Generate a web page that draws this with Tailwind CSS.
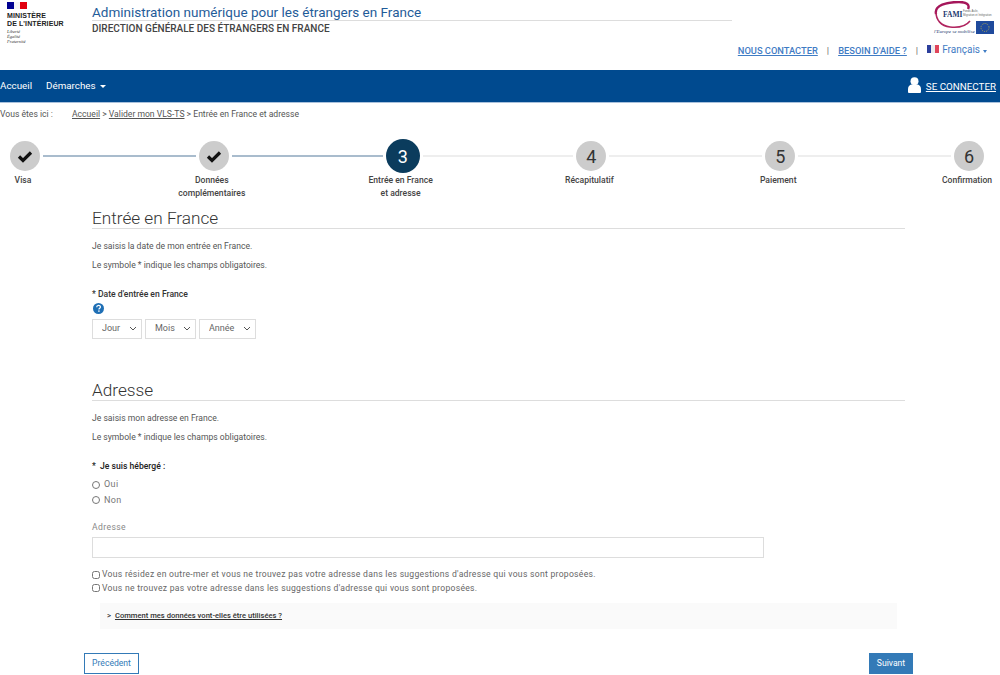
<!DOCTYPE html>
<html lang="fr">
<head>
  <meta charset="UTF-8" />
  <title>Entrée en France et adresse</title>
  <script src="https://cdn.jsdelivr.net/npm/@tailwindcss/browser@4"></script>
</head>
<body class="bg-white font-['Roboto',sans-serif] h-[675px] overflow-hidden flex flex-col text-[#555]">

  <!-- header -->
  <header class="h-[70px] flex shrink-0">
    <div class="w-[92px] pl-[7px] pt-[2px] shrink-0">
      <div class="flex w-[20px] h-[7px]">
        <div class="w-[7px] bg-[#000091]"></div>
        <div class="w-[6px] bg-[#f5f5f5]"></div>
        <div class="w-[7px] bg-[#e1000f]"></div>
      </div>
      <div class="font-['Liberation_Sans',sans-serif] font-bold text-[7px] leading-[7.5px] text-[#222] mt-[3px] tracking-[0.1px]">MINISTÈRE<br>DE L'INTÉRIEUR</div>
      <div class="font-['Liberation_Serif',serif] italic text-[4.5px] leading-[5px] text-[#333] mt-[2px]">Liberté<br>Égalité<br>Fraternité</div>
    </div>
    <div class="w-[640px] shrink-0">
      <div class="text-[13.5px] leading-[20px] text-[#1f5c99] pt-[2px] h-[21px] border-b border-[#ddd]">Administration numérique pour les étrangers en France</div>
      <div class="text-[10px] leading-[16px] text-[#444] font-medium">DIRECTION GÉNÉRALE DES ÉTRANGERS EN FRANCE</div>
    </div>
    <div class="flex-1 flex flex-col items-end">
      <div class="h-[35px] mr-[5px] mt-px">
        <svg width="62" height="34" viewBox="0 0 62 34">
          <path d="M3 13C1 4 14 1 26 1c8 0 11 3 9 7" fill="none" stroke="#a5165a" stroke-width="2.400"/>
          <path d="M3 11c0 8 5 14 14 15 9 1 16-1 20-6" fill="none" stroke="#b0245f" stroke-width="1.600"/>
          <text x="10" y="16" font-family="Liberation Serif" font-weight="700" font-size="7.500" fill="#21386e">FAMI</text>
          <text x="30" y="11" font-family="Liberation Sans" font-size="2.800" fill="#666">Fonds Asile,</text>
          <text x="30" y="15" font-family="Liberation Sans" font-size="2.800" fill="#666">Migration et Intégration</text>
          <text x="1" y="32" font-family="Liberation Serif" font-style="italic" font-size="5" fill="#21386e">l'Europe se mobilise</text>
          <rect x="43" y="20" width="18" height="13" fill="#1f4a9c"/>
          <circle cx="52" cy="26.500" r="4" fill="none" stroke="#d9c23a" stroke-width="0.800" stroke-dasharray="0.900 1.200"/>
        </svg>
      </div>
      <div class="flex items-center text-[9.3px] leading-[14px] font-medium mt-[8px] pr-[13px] text-[#3f7cc4] whitespace-nowrap">
        <a class="underline">NOUS CONTACTER</a>
        <span class="mx-[9px] text-[#777]">|</span>
        <a class="underline">BESOIN D'AIDE ?</a>
        <span class="mx-[9px] text-[#777]">|</span>
        <span class="flex w-[12px] h-[8px] mr-[3px] mt-[-4px]">
          <span class="w-1/3 bg-[#2c3f9c]"></span><span class="w-1/3 bg-[#eee]"></span><span class="w-1/3 bg-[#e0455a]"></span>
        </span>
        <span class="text-[10px] mt-[-3px] font-normal">Français</span>
        <span class="ml-[3px] border-x-[2.5px] border-x-transparent border-t-[3px] border-t-[#3f7cc4]"></span>
      </div>
    </div>
  </header>

  <!-- nav -->
  <nav class="h-[33px] shrink-0 bg-[#004a8f] border-b border-[#a9c1dc] flex items-center text-white text-[9.8px]">
    <a>Accueil</a>
    <a class="ml-[14px] flex items-center">Démarches
      <span class="ml-[4px] border-x-[3px] border-x-transparent border-t-[3px] border-t-white"></span>
    </a>
    <div class="ml-auto flex items-center pr-[4px]">
      <svg width="13" height="16" viewBox="0 0 13 16" class="mr-[5px] mb-[3px]" fill="#fff">
        <circle cx="6.500" cy="4.200" r="4"/>
        <path d="M0 12c0-3 2-4.500 4-4.500 1 .8 4 .8 5 0 2 0 4 1.500 4 4.500v3a1 1 0 0 1-1 1H1a1 1 0 0 1-1-1z"/>
      </svg>
      <a class="underline mt-[2px]">SE CONNECTER</a>
    </div>
  </nav>

  <!-- breadcrumb -->
  <div class="h-[24px] pb-[2px] shrink-0 flex items-center text-[8.6px] text-[#555]">
    <span class="w-[72px]">Vous êtes ici :</span>
    <a class="underline">Accueil</a>&nbsp;&gt;&nbsp;<a class="underline">Valider mon VLS-TS</a>&nbsp;&gt; Entrée en France et adresse
  </div>

  <!-- stepper -->
  <div class="pl-[10px] pr-[16px] mt-[12px] shrink-0">
    <div class="flex items-center gap-[3px] h-[34px]">
      <div class="w-[30px] h-[30px] rounded-full bg-[#ccc] flex items-center justify-center">
        <svg width="16" height="13" viewBox="0 0 16 13"><path d="M2 6.500l4 4 8-8" fill="none" stroke="#111" stroke-width="3.200"/></svg>
      </div>
      <div class="w-[153.2px] h-[2px] bg-[#a9bccd]"></div>
      <div class="w-[30px] h-[30px] rounded-full bg-[#ccc] flex items-center justify-center">
        <svg width="16" height="13" viewBox="0 0 16 13"><path d="M2 6.500l4 4 8-8" fill="none" stroke="#111" stroke-width="3.200"/></svg>
      </div>
      <div class="w-[150.6px] h-[2px] bg-[#a9bccd]"></div>
      <div class="w-[34px] h-[34px] rounded-full bg-[#0b3c5d] text-white text-[18px] flex items-center justify-center">3</div>
      <div class="w-[150.5px] h-[2px] bg-[#eee]"></div>
      <div class="w-[30px] h-[30px] rounded-full bg-[#ccc] text-[#333] text-[18px] flex items-center justify-center">4</div>
      <div class="w-[153px] h-[2px] bg-[#eee]"></div>
      <div class="w-[30px] h-[30px] rounded-full bg-[#ccc] text-[#333] text-[18px] flex items-center justify-center">5</div>
      <div class="w-[152.7px] h-[2px] bg-[#eee]"></div>
      <div class="w-[30px] h-[30px] rounded-full bg-[#ccc] text-[#333] text-[18px] flex items-center justify-center">6</div>
    </div>
    <div class="flex justify-between mt-[1px] mr-[4px] h-[26px] text-[8.6px] leading-[12.5px] font-medium text-[#444] text-center">
      <div class="w-[26px] flex justify-center whitespace-nowrap">Visa</div>
      <div class="w-[26px] flex justify-center whitespace-nowrap">Données<br>complémentaires</div>
      <div class="w-[26px] flex justify-center whitespace-nowrap">Entrée en France<br>et adresse</div>
      <div class="w-[26px] flex justify-center whitespace-nowrap">Récapitulatif</div>
      <div class="w-[26px] flex justify-center whitespace-nowrap">Paiement</div>
      <div class="w-[26px] flex justify-center whitespace-nowrap">Confirmation</div>
    </div>
  </div>

  <!-- form -->
  <main class="ml-[92px] w-[813px] shrink-0 text-[8.6px]">
    <h2 class="text-[17.2px] leading-[20px] font-light text-[#333] border-b border-[#ddd] h-[21px] mt-[8px]">Entrée en France</h2>
    <p class="mt-[12px] leading-[11px]">Je saisis la date de mon entrée en France.</p>
    <p class="mt-[8px] leading-[11px]">Le symbole * indique les champs obligatoires.</p>
    <label class="block mt-[18px] leading-[11px] font-medium text-[#333]">* Date d'entrée en France</label>
    <svg width="11" height="11" viewBox="0 0 11 11" class="mt-[3px] ml-px">
      <circle cx="5.500" cy="5.500" r="5.500" fill="#1f6fb5"/>
      <path d="M3.700 4.200c0-2.400 3.700-2.400 3.700-.2 0 1.300-1.500 1.300-1.500 2.500" fill="none" stroke="#fff" stroke-width="1.200"/>
      <rect x="5.200" y="7.400" width="1.400" height="1.400" fill="#fff"/>
    </svg>
    <div class="flex gap-[3px] mt-[5px]">
      <div class="relative">
        <select class="appearance-none w-[50px] h-[20px] border border-[#ddd] pl-[9px] text-[9px] text-[#666]"><option>Jour</option></select>
        <svg width="8" height="5" viewBox="0 0 8 5" class="absolute right-[5px] top-[7px]"><path d="M1 1l3 3 3-3" fill="none" stroke="#555"/></svg>
      </div>
      <div class="relative">
        <select class="appearance-none w-[51px] h-[20px] border border-[#ddd] pl-[9px] text-[9px] text-[#666]"><option>Mois</option></select>
        <svg width="8" height="5" viewBox="0 0 8 5" class="absolute right-[5px] top-[7px]"><path d="M1 1l3 3 3-3" fill="none" stroke="#555"/></svg>
      </div>
      <div class="relative">
        <select class="appearance-none w-[57px] h-[20px] border border-[#ddd] pl-[9px] text-[9px] text-[#666]"><option>Année</option></select>
        <svg width="8" height="5" viewBox="0 0 8 5" class="absolute right-[5px] top-[7px]"><path d="M1 1l3 3 3-3" fill="none" stroke="#555"/></svg>
      </div>
    </div>

    <h2 class="text-[17.2px] leading-[20px] font-light text-[#333] border-b border-[#ddd] h-[21px] mt-[41px]">Adresse</h2>
    <p class="mt-[12px] leading-[11px]">Je saisis mon adresse en France.</p>
    <p class="mt-[8px] leading-[11px]">Le symbole * indique les champs obligatoires.</p>
    <label class="block mt-[18px] leading-[11px] font-medium text-[#222]">*&nbsp; Je suis hébergé :</label>
    <div class="flex items-center mt-[5px] h-[15.5px] text-[9px] tracking-[0.4px] text-[#777]">
      <input type="radio" name="heberge" class="w-[8px] h-[8px] m-0 mr-[4px]">Oui
    </div>
    <div class="flex items-center h-[15.5px] text-[9px] tracking-[0.4px] text-[#777]">
      <input type="radio" name="heberge" class="w-[8px] h-[8px] m-0 mr-[4px]">Non
    </div>
    <label class="block mt-[14px] leading-[11px] text-[8.6px] tracking-[0.4px] text-[#888]">Adresse</label>
    <input type="text" class="block w-[672px] h-[20.5px] mt-[4px] border border-[#ddd]">
    <div class="flex items-center mt-[10.5px] h-[13px] tracking-[0.28px] text-[#666]">
      <input type="checkbox" class="w-[8px] h-[8px] m-0 mr-[2px]">Vous résidez en outre-mer et vous ne trouvez pas votre adresse dans les suggestions d'adresse qui vous sont proposées.
    </div>
    <div class="flex items-center h-[14px] tracking-[0.28px] text-[#666]">
      <input type="checkbox" class="w-[8px] h-[8px] m-0 mr-[2px]">Vous ne trouvez pas votre adresse dans les suggestions d'adresse qui vous sont proposées.
    </div>
    <div class="ml-[8px] w-[797px] h-[26px] mt-[8px] bg-[#fafafa] flex items-center pl-[7px] text-[7.6px] font-medium text-[#333]">
      <span class="mr-[4px]">&gt;</span><a class="underline">Comment mes données vont-elles être utilisées ?</a>
    </div>
  </main>

  <!-- actions -->
  <div class="flex justify-between ml-[84px] w-[829px] mt-[24px] shrink-0 text-[8.6px]">
    <button class="w-[55px] h-[21px] border border-[#337ab7] text-[#337ab7]">Précédent</button>
    <button class="w-[44px] h-[21px] bg-[#337ab7] text-white">Suivant</button>
  </div>

</body>
</html>
